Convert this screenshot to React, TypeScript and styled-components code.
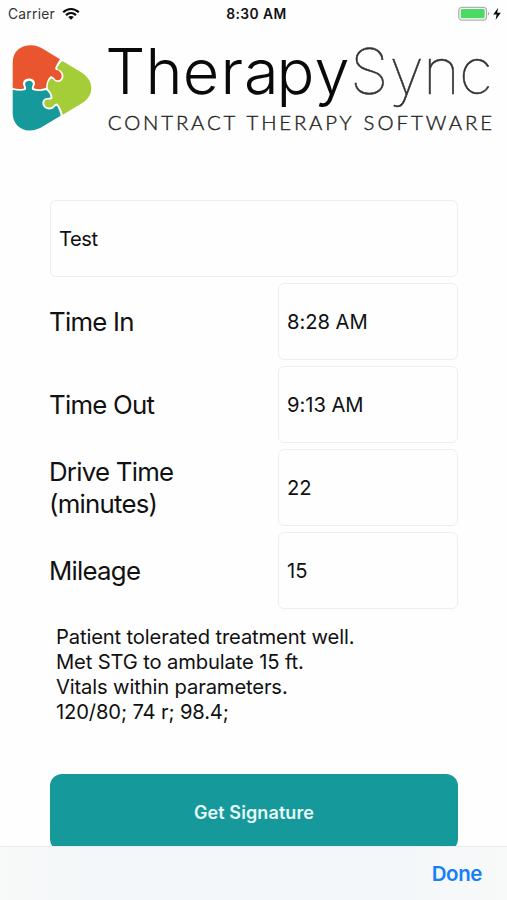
import React from 'react';
import styled, { createGlobalStyle } from 'styled-components';

const GlobalStyle = createGlobalStyle`
  * { box-sizing: border-box; }
  body { margin: 0; background: #fefefe; font-family: Inter, "Liberation Sans", sans-serif; color: #111; }
`;

const Screen = styled.div`
  width: 507px;
  height: 900px;
  display: flex;
  flex-direction: column;
  overflow: hidden;
  background: #fefefe;
`;

const StatusBar = styled.div`
  height: 28px;
  flex: none;
  display: grid;
  grid-template-columns: 1fr auto 1fr;
  align-items: center;
  padding: 0 4px 0 8px;
  font-size: 13.8px;
`;

const Carrier = styled.div`
  display: flex;
  align-items: center;
  gap: 7px;
  color: #333;
  letter-spacing: 0.25px;
`;

const Clock = styled.div`
  font-weight: 600;
  letter-spacing: 0.45px;
  padding-left: 2px;
`;

const Power = styled.div`
  display: flex;
  justify-content: flex-end;
`;

const Brand = styled.header`
  height: 112px;
  flex: none;

  svg { display: block; }
`;

const Form = styled.main`
  flex: 1;
  min-height: 0;
  overflow: hidden;
  display: flex;
  flex-direction: column;
  padding: 60px 49px 0 50px;
`;

const Field = styled.div<{ $tracking?: number }>`
  flex: none;
  height: 77px;
  display: flex;
  align-items: center;
  padding-left: 8px;
  border: 1px solid #eee;
  border-radius: 6px;
  font-size: 20.2px;
  letter-spacing: ${({ $tracking = -0.05 }) => $tracking}px;
`;

const Row = styled.div`
  flex: none;
  display: grid;
  grid-template-columns: 1fr 180px;
  align-items: center;
  margin-top: 6px;
`;

const Label = styled.div`
  margin-left: -1px;
  font-size: 25.8px;
  line-height: 32px;
  letter-spacing: -0.75px;
  white-space: pre-line;
`;

const Notes = styled.div`
  flex: none;
  margin: 15px 0 0 6px;
  font-size: 20.2px;
  line-height: 25px;
  letter-spacing: -0.14px;
  white-space: pre-line;
`;

const SignatureButton = styled.button`
  flex: none;
  height: 77px;
  margin-top: 50px;
  padding: 0;
  border: 0;
  border-radius: 12px;
  background: #16999a;
  color: #e6fafa;
  font: 600 18px Inter, "Liberation Sans", sans-serif;
  letter-spacing: 0.1px;
`;

const Toolbar = styled.footer`
  height: 54px;
  flex: none;
  display: flex;
  align-items: center;
  justify-content: flex-end;
  padding-right: 25px;
  border-top: 1px solid #e9eaeb;
  background: linear-gradient(90deg, #f8f9f9 0, #f3f7f9 20%, #f4f7f9 80%, #f8f9f9 100%);
`;

const DoneButton = styled.button`
  border: 0;
  padding: 0;
  background: none;
  color: #157efb;
  font: 600 20.5px Inter, "Liberation Sans", sans-serif;
  letter-spacing: -0.4px;
`;

const WifiIcon = () => (
  <svg width="18" height="14" viewBox="0 0 18 14" fill="none" stroke="#080808" strokeWidth="2.2">
    <path d="M1.2 5.2C5.8 .9 12.2 .9 16.8 5.2" />
    <path d="M4 8.1C7 5.4 11 5.4 14 8.1" />
    <path d="M9 12.7 6.2 9.9C7.8 8.6 10.2 8.6 11.8 9.9Z" fill="#080808" stroke="none" />
  </svg>
);

const BatteryIcon = () => (
  <svg width="45" height="16" viewBox="0 0 45 16">
    <rect x=".8" y="1.3" width="27.7" height="12.8" rx="3.4" fill="#fff" stroke="#b0b0b0" strokeWidth="1.3" />
    <rect x="2.7" y="3" width="24" height="9.3" rx="1.5" fill="#4cd964" />
    <path d="M30 5.8C31.6 6.4 31.6 9 30 9.6Z" fill="#aaa" />
    <path d="M40.2 1.8 35.2 8.5H38.6L37.6 14 42.8 6.8H39.2Z" fill="#090909" />
  </svg>
);

const Logo = () => (
  <svg width="507" height="112" viewBox="0 28 507 112">
    <path
      fill="#e8552f"
      d="M12.7 88V63C12.7 51 21 45.3 31 45.3C36 45.3 40 47 44 49.4L60 59.3C58 62.2 56.2 65 55 68.5C56 70.8 58.4 69.6 59.6 71.6C62.7 74.4 62.3 79.6 58.5 80.3C54.2 80.8 54 75.5 50.5 76.2C48 78.4 46.3 82.4 46 87.8C41.5 89.5 37.5 89.9 33.9 88.3C33.1 86 35.6 85.5 34.9 82.6C34.2 77.3 24 77.2 23 82.7C22.5 86 24.8 86 24 88.5C20 89.4 16.5 89 12.7 88Z"
    />
    <path
      fill="#a4cd38"
      d="M62.5 61 80 71.4C88 76.2 91.3 81.5 91.3 88.3C91.3 95 87.5 100 81.2 103.8L62.8 114.7C61.4 110.5 60.4 106.8 57.6 103.8C54.7 102.6 54 106.6 50.8 107.4C46.8 108.3 43.2 105 44.5 101.9C45.5 98.2 50.2 100.5 52.3 98.8C53.2 94.5 50 91.5 47.8 88.5C47.3 84.2 48.5 80.3 51 78.5C53.5 78.2 54.3 82.1 58.3 82C64 81.9 65.3 73.8 60.5 70.5C58.8 69.5 57 69.4 57.1 67.7C58.2 65.2 60 63.2 62.5 61Z"
    />
    <path
      fill="#16999a"
      d="M12.7 89.8C17 90.8 21 91.1 25.4 90.1C27.3 87.5 24.6 85.6 25.2 83.2C26.2 79.8 32 79.8 32.8 83.2C33.2 85.6 30.8 87.3 32.5 90C37.6 91.6 42 91.2 46.3 90C48.8 92 50.7 94.9 50.4 97.5C47.5 98.6 44.2 97.3 42.6 101.2C41.2 106 45.8 110.3 51 109.3C54.3 108.7 55 105.4 56.8 105.7C58.6 108.4 60 112.1 60.7 115.8L44.8 125.3C39 129 34.4 130.5 29.5 130.5C19.2 130.5 12.7 122.5 12.7 113.5Z"
    />
    <g fontFamily="Inter, sans-serif" fontSize="63" strokeLinejoin="round">
      <text x="105.2 145.6 182.7 220.5 244 276.5 314.5" y="94.2" fontWeight="300" fill="#090909">Therapy</text>
      <text x="350 389.5 423 459" y="94" fontWeight="100" fill="#333" stroke="#333" strokeWidth=".5">Sync</text>
    </g>
    <g fontFamily="Lato, sans-serif" fontSize="20.3" fontWeight="300" fill="#222" stroke="#222" strokeWidth=".4">
      <text x="107.8" y="129.7" textLength="127.5">CONTRACT</text>
      <text x="246.6" y="129.7" textLength="105">THERAPY</text>
      <text x="363.6" y="129.7" textLength="128.5">SOFTWARE</text>
    </g>
  </svg>
);

const entries = [
  { label: 'Time In', value: '8:28 AM' },
  { label: 'Time Out', value: '9:13 AM' },
  { label: 'Drive Time\n(minutes)', value: '22' },
  { label: 'Mileage', value: '15' },
];

const notes = `Patient tolerated treatment well.
Met STG to ambulate 15 ft.
Vitals within parameters.
120/80; 74 r; 98.4;`;

export default function App() {
  return (
    <Screen>
      <GlobalStyle />
      <StatusBar>
        <Carrier>Carrier <WifiIcon /></Carrier>
        <Clock>8:30 AM</Clock>
        <Power><BatteryIcon /></Power>
      </StatusBar>
      <Brand><Logo /></Brand>
      <Form>
        <Field $tracking={-0.5}>Test</Field>
        {entries.map(({ label, value }) => (
          <Row key={label}>
            <Label>{label}</Label>
            <Field>{value}</Field>
          </Row>
        ))}
        <Notes>{notes}</Notes>
        <SignatureButton>Get Signature</SignatureButton>
      </Form>
      <Toolbar><DoneButton>Done</DoneButton></Toolbar>
    </Screen>
  );
}
